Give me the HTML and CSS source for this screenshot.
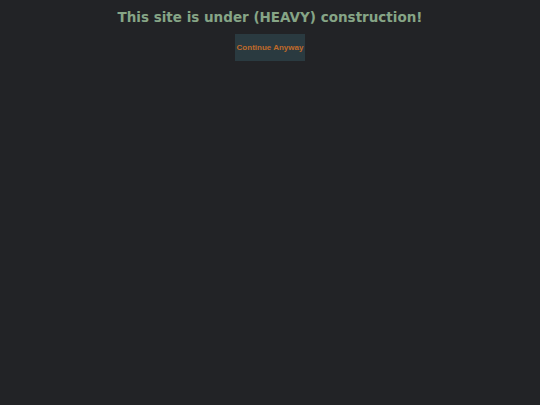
FILE: index.html
```html
<!DOCTYPE html>
<html>
<head>
<meta charset="utf-8">
<link rel="stylesheet" href="styles.css">
</head>
<body>
<main class="page">
  <h1 class="title">This site is under (HEAVY) construction!</h1>
  <button class="continue">Continue Anyway</button>
</main>
</body>
</html>
```
FILE: styles.css
```css
html, body {
  margin: 0;
  padding: 0;
  background: #222326;
  height: 100%;
}
.page {
  display: flex;
  flex-direction: column;
  align-items: center;
  padding-top: 8px;
}
.title {
  margin: 0;
  font-family: "DejaVu Sans", Verdana, sans-serif;
  font-weight: bold;
  font-size: 13.5px;
  line-height: 18px;
  color: #86a586;
}
.continue {
  margin-top: 8px;
  width: 70px;
  height: 27px;
  padding: 0;
  border: none;
  background: #2a3a40;
  color: #c06a2a;
  font-family: "Liberation Sans", Arial, sans-serif;
  font-weight: bold;
  font-size: 8px;
}
```
